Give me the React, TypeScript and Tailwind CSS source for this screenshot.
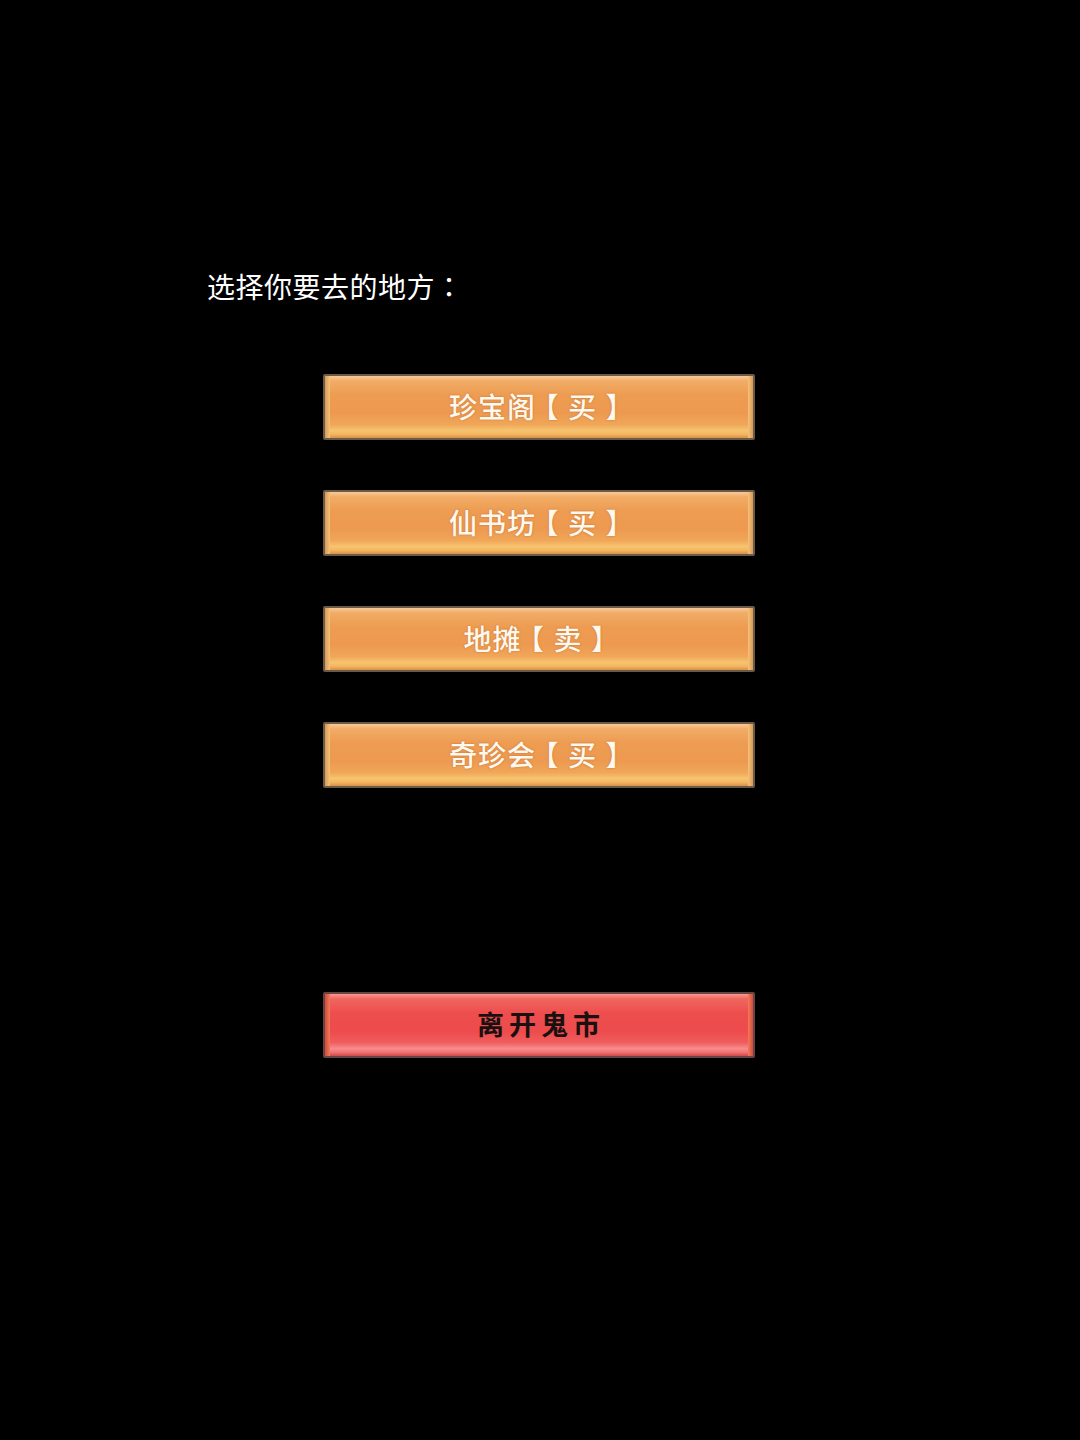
import React from "react";

const font = { fontFamily: '"Noto Sans CJK SC", "Noto Sans", sans-serif' };
const tc = { fontFamily: '"Noto Sans CJK TC", "Noto Sans CJK SC", sans-serif' };

function Bracket({ ch }: { ch: string }) {
  return (
    <span className="inline-block w-[32px] text-center [font-feature-settings:'halt']" style={font}>
      {ch}
    </span>
  );
}

function OrangeButton({ name, tag }: { name: string; tag: string }) {
  return (
    <div className="relative h-[66px] w-[432px] rounded-[2px] bg-[#6b5a48] p-[2px]">
      <div className="relative h-full w-full overflow-hidden bg-[linear-gradient(180deg,#f7c89a_0%,#f1ac66_8%,#ee9c52_30%,#ed9a50_60%,#f0a658_78%,#f6c470_88%,#f3b660_94%,#d8904a_100%)]">
        <div className="absolute inset-y-0 left-0 w-[5px] bg-[linear-gradient(90deg,#d89a55,#f4c27a)]" />
        <div className="absolute inset-y-0 right-0 w-[5px] bg-[linear-gradient(270deg,#d89a55,#f4c27a)]" />
        <div className="relative flex h-full items-center justify-center pb-[3px]">
          <span
            className="text-[28px] font-medium leading-none tracking-[1px] text-[#fff8ee] [text-shadow:0_0_2px_rgba(160,80,20,0.6)]"
            style={font}
          >
            {name}
            <Bracket ch="【" />
            {tag}
            <Bracket ch="】" />
          </span>
        </div>
      </div>
    </div>
  );
}

function RedButton({ label }: { label: string }) {
  return (
    <div className="relative h-[66px] w-[432px] rounded-[2px] bg-[#6a4444] p-[2px]">
      <div className="relative h-full w-full overflow-hidden bg-[linear-gradient(180deg,#f59a90_0%,#f0665f_8%,#ee4e4e_30%,#ed4b4d_60%,#f05c5c_78%,#f88c8c_88%,#f27272_94%,#d04848_100%)]">
        <div className="absolute inset-y-0 left-0 w-[5px] bg-[linear-gradient(90deg,#d04a3a,#f47a5a)]" />
        <div className="absolute inset-y-0 right-0 w-[5px] bg-[linear-gradient(270deg,#d04a3a,#f47a5a)]" />
        <div className="relative flex h-full items-center justify-center pb-[3px] pl-[4px]">
          <span
            className="text-[27px] font-bold leading-none tracking-[5px] text-[#1a1010]"
            style={font}
          >
            {label}
          </span>
        </div>
      </div>
    </div>
  );
}

export default function App() {
  return (
    <div className="min-h-[1440px] w-full bg-black">
      <div className="pl-[207px] pt-[267px]">
        <div className="text-[28px] leading-[38px] tracking-[0.5px] text-white" style={font}>
          选择你要去的地方<span style={tc}>：</span>
        </div>
      </div>
      <div className="mt-[69px] flex flex-col items-center">
        <div className="flex flex-col gap-[50px] pr-[2px]">
          <OrangeButton name="珍宝阁" tag="买" />
          <OrangeButton name="仙书坊" tag="买" />
          <OrangeButton name="地摊" tag="卖" />
          <OrangeButton name="奇珍会" tag="买" />
        </div>
        <div className="mt-[204px] pr-[2px]">
          <RedButton label="离开鬼市" />
        </div>
      </div>
    </div>
  );
}
